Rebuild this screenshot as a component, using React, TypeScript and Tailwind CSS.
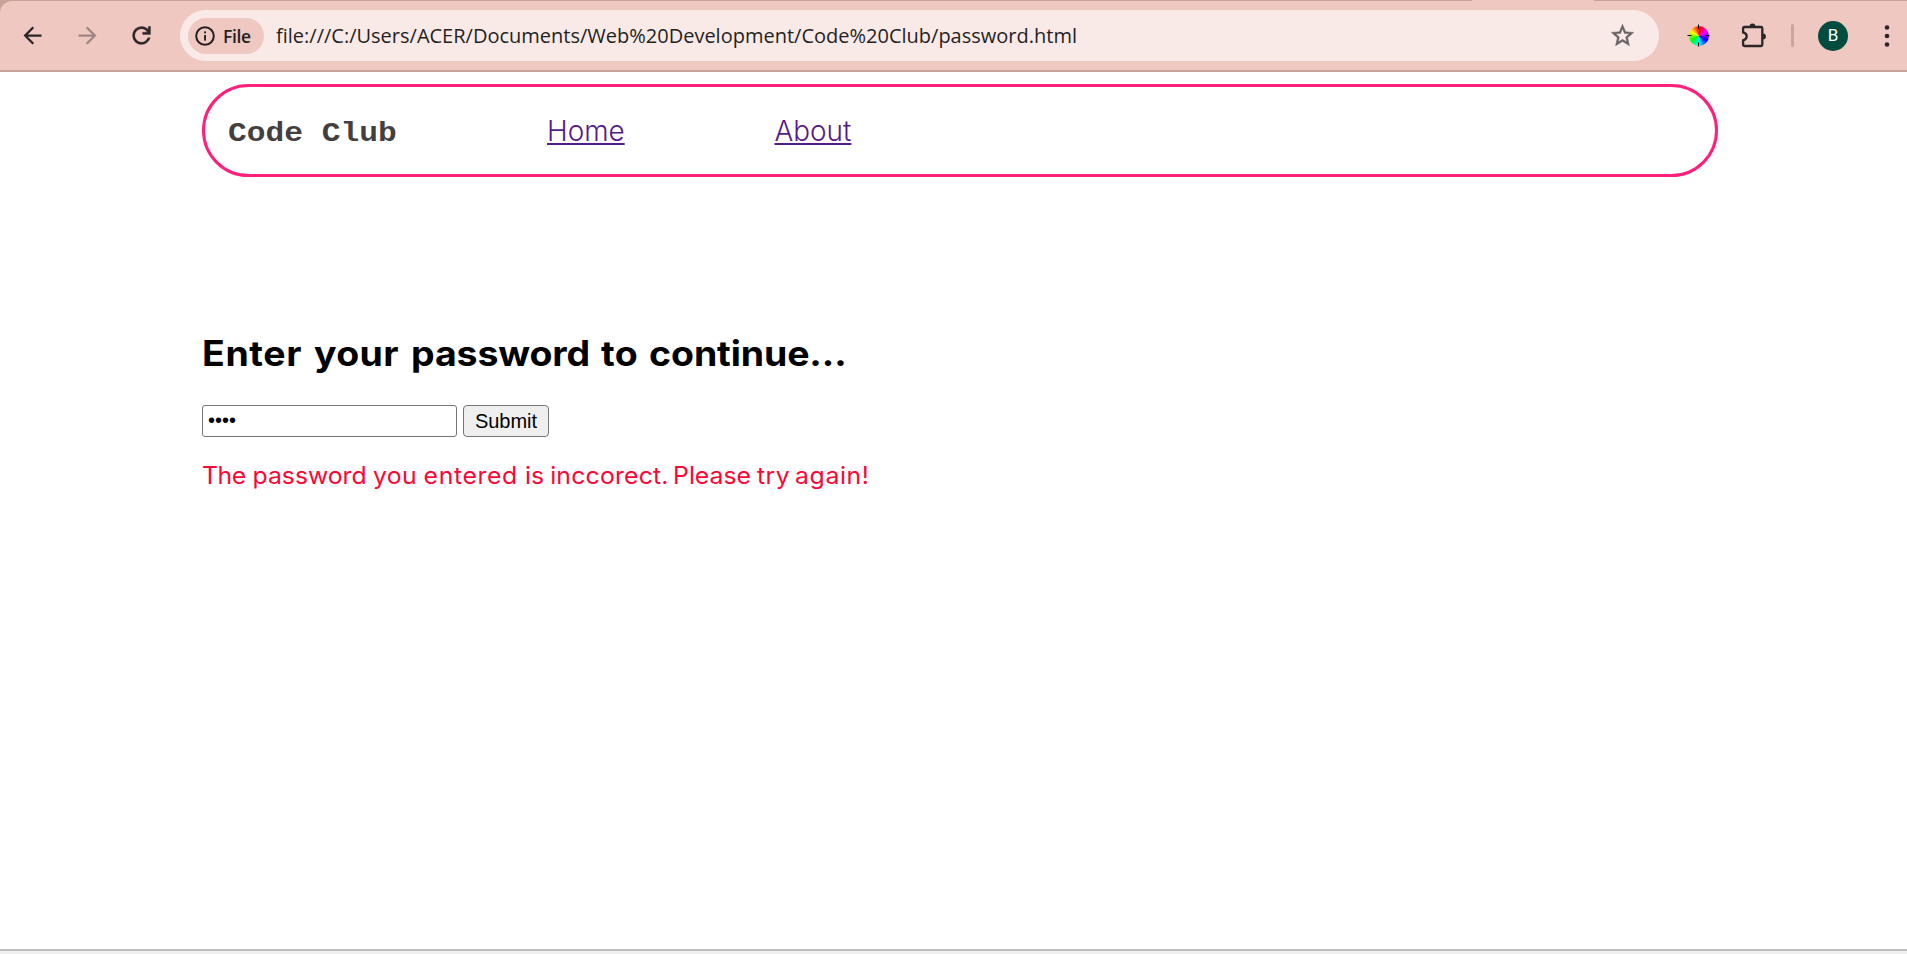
import { useState } from "react";

function BackIcon() {
  return (
    <svg viewBox="0 0 24 24" className="h-[27px] w-[27px]" fill="#2b2627">
      <path d="M7.825 13l5.6 5.6L12 20l-8-8 8-8 1.425 1.4-5.6 5.6H20v2z" />
    </svg>
  );
}

function ForwardIcon() {
  return (
    <svg viewBox="0 0 24 24" className="h-[27px] w-[27px]" fill="#9f8683">
      <path d="M16.175 13H4v-2h12.175l-5.6-5.6L12 4l8 8-8 8-1.425-1.4z" />
    </svg>
  );
}

function ReloadIcon() {
  return (
    <svg viewBox="0 0 24 24" className="h-[27px] w-[27px]" fill="#2b2627" stroke="#2b2627" strokeWidth="0.3">
      <path d="M12 20q-3.35 0-5.675-2.325T4 12t2.325-5.675T12 4q1.725 0 3.3.713T18 6.75V4h2v7h-7V9h4.2q-.8-1.4-2.187-2.2T12 6Q9.5 6 7.75 7.75T6 12t1.75 4.25T12 18q1.925 0 3.475-1.1T17.65 14h2.1q-.7 2.65-2.85 4.325T12 20" />
    </svg>
  );
}

function InfoIcon() {
  return (
    <svg viewBox="0 0 20 20" className="h-5 w-5">
      <circle cx="10" cy="10" r="8.8" fill="none" stroke="#241f21" strokeWidth="2" />
      <rect x="9.1" y="9" width="1.9" height="5.6" fill="#241f21" />
      <rect x="9.1" y="5.4" width="1.9" height="1.9" fill="#241f21" />
    </svg>
  );
}

function StarIcon() {
  return (
    <svg viewBox="0 0 24 24" className="h-[27px] w-[27px]" fill="#686263" stroke="#686263" strokeWidth="0.4">
      <path d="M22 9.24l-7.19-.62L12 2 9.19 8.63 2 9.24l5.46 4.73L5.82 21 12 17.27 18.18 21l-1.63-7.03L22 9.24zM12 15.4l-3.76 2.27 1-4.28-3.32-2.88 4.38-.38L12 6.1l1.71 4.04 4.38.38-3.32 2.88 1 4.28L12 15.4z" />
    </svg>
  );
}

function ColorWheel() {
  return (
    <div className="grid h-[23px] w-[23px] place-items-center">
      <div className="col-start-1 row-start-1 h-5 w-5 rounded-full bg-[conic-gradient(#f00,#f0f,#00f,#0ff,#0f0,#ff0,#f00)]" />
      <svg viewBox="0 0 23 23" className="col-start-1 row-start-1 h-[23px] w-[23px]" stroke="#000" strokeWidth="1">
        <path d="M11.5 0.5v4M11.5 18.5v4M0.5 11.5h4M18.5 11.5h4" />
      </svg>
    </div>
  );
}

function PuzzleIcon() {
  return (
    <svg viewBox="0 0 25 25" className="h-[25px] w-[25px]">
      <path
        d="M3.4 4H20a1.3 1.3 0 0 1 1.3 1.3v16.4a1.3 1.3 0 0 1-1.3 1.3H3.4a1.3 1.3 0 0 1-1.3-1.3v-4.4c2.4-.6 3.6-2 3.6-4s-1.2-3.4-3.6-4V5.3A1.3 1.3 0 0 1 3.4 4z"
        fill="none"
        stroke="#2b2627"
        strokeWidth="2.3"
      />
      <path d="M8.6 3.4a2.9 2.9 0 0 1 5.8 0zM22 10.5a2.9 2.9 0 0 1 0 5.8z" fill="#2b2627" />
    </svg>
  );
}

function MenuIcon() {
  return (
    <svg viewBox="0 0 6 24" className="h-6 w-1.5" fill="#2b2627">
      <circle cx="3" cy="3.5" r="2.3" />
      <circle cx="3" cy="12" r="2.3" />
      <circle cx="3" cy="20.5" r="2.3" />
    </svg>
  );
}

function Toolbar() {
  return (
    <header className="bg-[#cba096]">
      <div className="flex h-px">
        <div className="ml-[1472px] w-[122px] bg-[#efc9c1]" />
      </div>
      <div className="flex h-[71px] items-center rounded-tl-[12px] border-b-2 border-[#c5a29c] bg-[#efc9c1] pl-[19px]">
        <BackIcon />
        <div className="ml-[27.5px]">
          <ForwardIcon />
        </div>
        <div className="ml-[27px]">
          <ReloadIcon />
        </div>
        <div className="ml-[25.5px] flex h-[51px] w-[1479px] items-center rounded-full bg-[#f9eae8] pl-2">
          <div className="flex h-[36px] w-[76px] items-center rounded-full bg-[#efc9c1] pl-[7px]">
            <InfoIcon />
            <span className="ml-2 font-['Open_Sans'] text-[17.5px] leading-5 font-semibold tracking-[-0.4px] text-[#241f21]">
              File
            </span>
          </div>
          <span className="ml-3 font-['Open_Sans'] text-[20px] leading-6 text-[#241f21]">
            file:///C:/Users/ACER/Documents/Web%20Development/Code%20Club/password.html
          </span>
          <div className="mr-[23px] ml-auto">
            <StarIcon />
          </div>
        </div>
        <div className="ml-7">
          <ColorWheel />
        </div>
        <div className="ml-[31px]">
          <PuzzleIcon />
        </div>
        <div className="ml-[25px] h-[23px] w-[3px] rounded-full bg-[#cfa398]" />
        <div className="ml-6 flex h-[30px] w-[30px] items-center justify-center rounded-full bg-[#004d40] font-['Roboto'] text-[17px] leading-none text-white">
          B
        </div>
        <div className="ml-9">
          <MenuIcon />
        </div>
      </div>
    </header>
  );
}

function Nav() {
  return (
    <nav className="mt-3 ml-[202px] flex h-[93px] w-[1516px] items-center rounded-full border-3 border-[#ff1f7c] pl-[23px]">
      <span className="w-[319px] origin-left scale-x-[1.157] pt-[7px] font-['Liberation_Mono'] text-[27px] leading-9 font-bold text-[#443f3e]">
        Code Club
      </span>
      <a
        href="#home"
        className="w-[227.5px] font-['Inter'] text-[27.9px] leading-9 font-[350] text-[#551a8b] underline decoration-2 underline-offset-[2px]"
      >
        Home
      </a>
      <a
        href="#about"
        className="font-['Inter'] text-[27.9px] leading-9 font-[350] text-[#551a8b] underline decoration-2 underline-offset-[2px]"
      >
        About
      </a>
    </nav>
  );
}

export default function App() {
  const [password, setPassword] = useState("1234");

  return (
    <div className="flex h-[954px] flex-col overflow-hidden bg-white">
      <Toolbar />
      <Nav />
      <main className="flex grow flex-col items-start pl-[202px]">
        <h1 className="mt-[152px] origin-left scale-x-[1.07] font-['Inter'] text-[35px] leading-[48px] font-bold whitespace-pre text-black">
          <span className="inline-block w-[104.7px] tracking-[0.6px]">Enter </span>
          <span className="inline-block w-[90.7px] tracking-[0.3px]">your </span>
          <span className="inline-block w-[177.6px] tracking-[-0.1px]">password </span>
          <span className="inline-block w-[44.9px] tracking-[0.3px]">to </span>
          <span className="inline-block tracking-[-0.1px]">continue...</span>
        </h1>
        <form className="mt-[28px] flex gap-1.5" onSubmit={(e) => e.preventDefault()}>
          <input
            type="password"
            value={password}
            onChange={(e) => setPassword(e.target.value)}
            className="h-8 w-[255px] rounded-[3px] border border-[#767676] bg-white px-[5px] pb-0.5 font-['Liberation_Sans'] text-[20px] leading-6 text-black"
          />
          <button className="h-8 w-[86px] rounded-[4px] border border-[#767676] bg-[#efefef] font-['Liberation_Sans'] text-[20px] leading-6 text-black">
            Submit
          </button>
        </form>
        <p className="mt-[23px] origin-left scale-x-[1.04] font-['Inter'] text-[23.8px] leading-8 font-[380] whitespace-pre text-[#fb0735]">
          <span className="inline-block w-[48.6px] tracking-[-0.4px]">The </span>
          <span className="inline-block w-[115.9px]">password </span>
          <span className="inline-block w-[48.6px] tracking-[0.3px]">you </span>
          <span className="inline-block w-[97.6px] tracking-[0.6px]">entered </span>
          <span className="inline-block w-[24.1px]">is </span>
          <span className="inline-block w-[118.2px] tracking-[0.2px]">inccorect. </span>
          <span className="inline-block w-[80.8px]">Please </span>
          <span className="inline-block w-[36.5px] tracking-[0.4px]">try </span>
          <span className="inline-block tracking-[0.6px]">again!</span>
        </p>
      </main>
      <footer className="h-[5px] border-t-2 border-[#bdbdbd] bg-[#efefef]" />
    </div>
  );
}
